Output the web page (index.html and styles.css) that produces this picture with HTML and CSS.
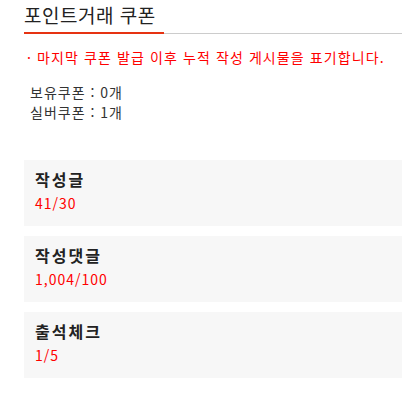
FILE: index.html
```html
<!DOCTYPE html>
<html lang="ko">
<head>
<meta charset="utf-8">
<link rel="stylesheet" href="styles.css">
</head>
<body>
<div class="wrap">
  <div class="head"><h2 class="title">포인트거래 쿠폰</h2></div>
  <p class="notice">· 마지막 쿠폰 발급 이후 누적 작성 게시물을 표기합니다.</p>
  <div class="info">
    <div>보유쿠폰 : 0개</div>
    <div>실버쿠폰 : 1개</div>
  </div>
  <div class="cards">
    <div class="card"><div class="card-title">작성글</div><div class="card-value">41/30</div></div>
    <div class="card"><div class="card-title">작성댓글</div><div class="card-value">1,004/100</div></div>
    <div class="card"><div class="card-title">출석체크</div><div class="card-value">1/5</div></div>
  </div>
</div>
</body>
</html>
```
FILE: styles.css
```css
html, body { margin: 0; padding: 0; background: #fff; }
body { font-family: "Noto Sans CJK KR", "Noto Sans", sans-serif; color: #333; }
.wrap { padding-left: 24px; }
.head { border-bottom: 1px solid #cccccc; height: 33px; }
.title {
  margin: 0 0 -1px 0;
  display: inline-block;
  width: 140px;
  height: 32px;
  line-height: 30px;
  font-size: 19px;
  font-weight: normal;
  color: #222;
  letter-spacing: 0.5px;
  border-bottom: 2px solid #e63312;
}
.notice { margin: 13px 0 0 3px; font-size: 14px; line-height: 20px; color: #ff0000; letter-spacing: 1.1px; }
.info { margin: 15px 0 0 6px; font-size: 14px; line-height: 20px; color: #333; letter-spacing: 1px; }
.cards { margin-top: 38px; display: flex; flex-direction: column; gap: 10px; }
.card { background: #f7f7f7; padding: 8px 11px 12px; height: 46px; }
.card-title { font-size: 16px; line-height: 22px; font-weight: bold; color: #222; letter-spacing: 2px; }
.card-value { margin-top: 2px; font-size: 14px; line-height: 22px; color: #ff0000; letter-spacing: 1px; }
```
